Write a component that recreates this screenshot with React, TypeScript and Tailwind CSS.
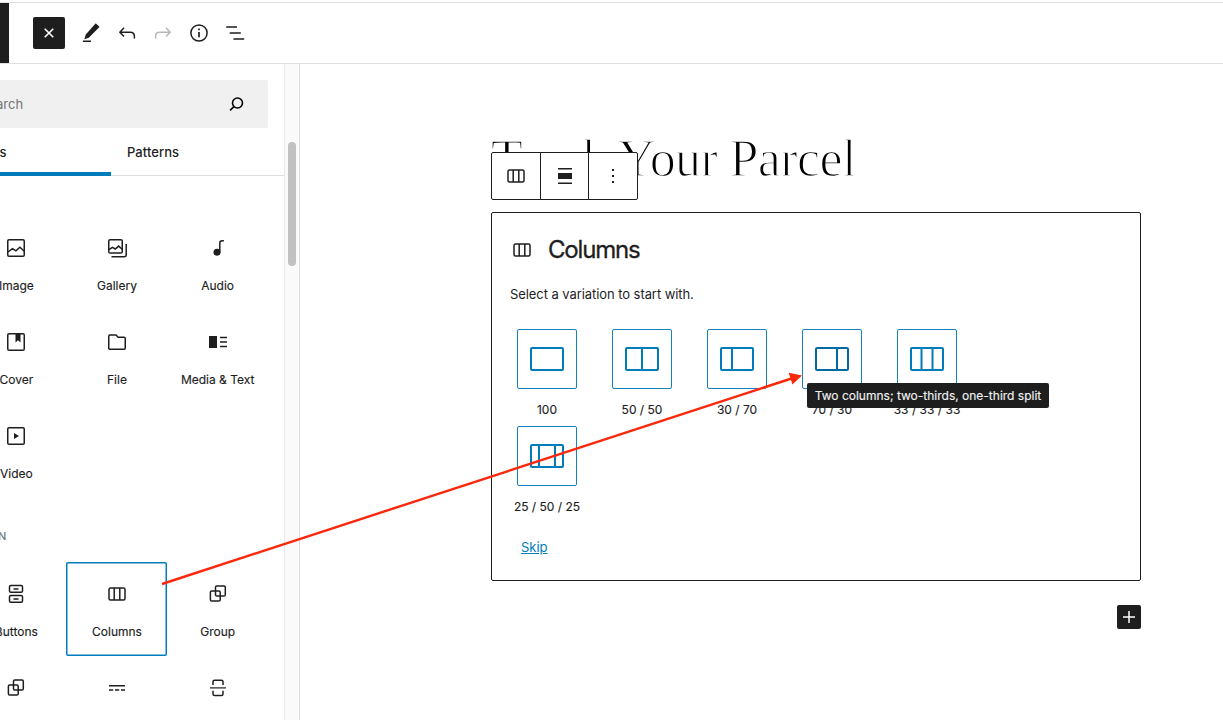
import type { ReactNode } from "react";

function Icon({ children, className = "" }: { children: ReactNode; className?: string }) {
  return (
    <svg
      viewBox="0 0 24 24"
      width="24"
      height="24"
      fill="none"
      stroke="currentColor"
      strokeWidth="1.5"
      className={`block shrink-0 ${className}`}
    >
      {children}
    </svg>
  );
}

const ColumnsIcon = () => (
  <Icon>
    <rect x="4" y="6" width="16" height="12" rx="1.5" />
    <path d="M9.2 6v12M14.8 6v12" />
  </Icon>
);

const GroupIcon = () => (
  <Icon>
    <rect x="9.5" y="4" width="9.8" height="10" rx="1.3" />
    <rect x="4.4" y="9" width="9.8" height="10" rx="1.3" />
  </Icon>
);

const ImageIcon = () => (
  <Icon>
    <rect x="3.75" y="3.75" width="16.5" height="16.5" rx="1.3" />
    <path d="M4 16l4.5-3.3 3.4 2.2 4-3.7 4.3 4.1" />
  </Icon>
);

const GalleryIcon = () => (
  <Icon>
    <rect x="3.75" y="3.75" width="13.5" height="13.3" rx="1.3" />
    <path d="M4 13.6l3.4-2.3 2.9 1.7 3.3-2.9 3.6 3.2" />
    <path d="M21.2 8v10.7c0 1.1-.9 2-2 2H6.5" />
  </Icon>
);

const AudioIcon = () => (
  <Icon>
    <circle cx="11" cy="16.2" r="3.5" fill="currentColor" stroke="none" />
    <path d="M13.8 16.5V7.1c0-1.6.9-2.3 2.4-2.3h1.7" />
  </Icon>
);

const CoverIcon = () => (
  <Icon>
    <rect x="3.75" y="3.75" width="16.5" height="16.5" rx="1.3" />
    <path d="M11.5 4h5v8.4L14 10.3l-2.5 2.1z" fill="currentColor" stroke="none" />
  </Icon>
);

const FileIcon = () => (
  <Icon>
    <path d="M3.75 6.3c0-.7.5-1.2 1.2-1.2h6.1l2 2.2h6c.7 0 1.2.5 1.2 1.2v9.6c0 .7-.5 1.2-1.2 1.2H4.95c-.7 0-1.2-.5-1.2-1.2z" />
  </Icon>
);

const MediaTextIcon = () => (
  <Icon>
    <path d="M3 6h8v12H3z" fill="currentColor" stroke="none" />
    <path d="M14 7.5h7M14 12h7M14 16.5h7" />
  </Icon>
);

const VideoIcon = () => (
  <Icon>
    <rect x="3.75" y="3.75" width="16.5" height="16.5" rx="1.3" />
    <path d="M10 9v6l5-3z" fill="currentColor" stroke="none" />
  </Icon>
);

const ButtonsIcon = () => (
  <Icon>
    <rect x="5.5" y="3.5" width="13" height="6.8" rx="1.3" />
    <rect x="5.5" y="13.5" width="13" height="6.8" rx="1.3" />
    <path d="M9.5 6.9h5M9.5 16.9h5" />
  </Icon>
);

const MoreIcon = () => (
  <Icon>
    <path d="M4 9.7h16M4 14h4.2M10 14h4.2M16 14h4" />
  </Icon>
);

const PageBreakIcon = () => (
  <Icon>
    <path d="M7 9V5.8c0-1 .6-1.6 1.6-1.6h6.8c1 0 1.6.6 1.6 1.6V9" />
    <path d="M7 14.8V18c0 1 .6 1.6 1.6 1.6h6.8c1 0 1.6-.6 1.6-1.6v-3.2" />
    <path d="M4 11.9h16" strokeWidth="1.2" />
  </Icon>
);

function Block({ icon, label, selected }: { icon: ReactNode; label: string; selected?: boolean }) {
  return (
    <div
      className={`flex h-[94px] flex-col items-center rounded-[2px] pt-5 ${
        selected ? "ring-[1.5px] ring-inset ring-[#007cba]" : ""
      }`}
    >
      <div className="pl-px">{icon}</div>
      <span className="mt-[18px] pl-px text-[12px] leading-4 whitespace-nowrap [-webkit-text-stroke:0.15px_#1e1e1e]">
        {label}
      </span>
    </div>
  );
}

function Variation({ label, lines, active }: { label: string; lines: number[]; active?: boolean }) {
  return (
    <div className="flex w-[95px] flex-col items-center">
      <div
        className={`flex h-[60px] w-[60px] items-center justify-center rounded-[2px] border border-[#1682bd] ${
          active ? "text-[#006ba1]" : "text-[#007cba]"
        }`}
      >
        <svg width="36" height="26" viewBox="0 0 36 26" fill="none" stroke="currentColor" strokeWidth="2">
          <rect x="2" y="2" width="32" height="22" rx="1" />
          {lines.map((x) => (
            <path key={x} d={`M${x} 2v22`} />
          ))}
        </svg>
      </div>
      <span className="mt-[13px] h-6 pl-px text-[12px] leading-4 whitespace-nowrap [-webkit-text-stroke:0.15px_#1e1e1e]">
        {label}
      </span>
    </div>
  );
}

function TopBar() {
  return (
    <header className="mt-[2px] flex h-[62px] shrink-0 border-y border-[#e0e0e0]">
      <div className="w-[9px] bg-[#1e1e1e]" />
      <div className="flex items-center pl-6">
        <div className="flex h-8 w-8 items-center justify-center rounded-[2px] bg-[#1e1e1e] text-white">
          <Icon>
            <path d="M7.7 7.7l8.6 8.6M16.3 7.7l-8.6 8.6" strokeWidth="1.6" />
          </Icon>
        </div>
        <div className="ml-[14px] flex gap-3">
          <Icon>
            <path
              d="M17.2 2.7l3 2.7c.3.3.3.6 0 .9L9.8 16.8 5.3 18.3l1.5-4.8L16.3 2.7c.3-.3.6-.3.9 0z"
              fill="currentColor"
              stroke="none"
            />
            <path d="M4 20.25h8" />
          </Icon>
          <Icon>
            <path d="M9 6.8L4.9 11.2 9 15.5M5 11.2h10.2c2.7 0 4.2 1.5 4.2 4.2v2.2" />
          </Icon>
          <Icon className="text-[#b8b8b8]">
            <path d="M15 6.8l4.1 4.4L15 15.5M19 11.2H8.8c-2.7 0-4.2 1.5-4.2 4.2v2.2" />
          </Icon>
          <Icon>
            <circle cx="12" cy="12" r="8.1" />
            <path d="M12 11v5.3M12 7.5v1.7" strokeWidth="1.7" />
          </Icon>
          <Icon>
            <path d="M3.2 5.9h10.8M6.7 12h11.1M10.4 18h10.8" />
          </Icon>
        </div>
      </div>
    </header>
  );
}

function Inserter() {
  return (
    <aside className="flex w-[300px] shrink-0 border-r border-[#dcdcdc]">
      <div className="w-[284px] overflow-hidden">
        <div className="mt-4 flex h-12 w-[268px] items-center justify-between rounded-r-[2px] bg-[#f0f0f0] pr-5">
          <span className="-ml-[20px] pt-[2px] text-[13px] text-[#757575]">Search</span>
          <Icon className="text-black">
            <circle cx="13.5" cy="11" r="5" strokeWidth="1.6" />
            <path d="M9.9 14.6l-3.8 3.8" strokeWidth="1.6" />
          </Icon>
        </div>
        <div className="flex h-12 border-b border-[#ddd] text-[13px] font-medium">
          <div className="-mb-px flex w-[111px] items-center border-b-4 border-[#007cba]">
            <span className="-ml-[35px] pt-[6px]">Blocks</span>
          </div>
          <div className="flex items-center pt-[3px] pl-4 tracking-[0.05px]">Patterns</div>
        </div>
        <div className="-ml-[34.5px] grid w-[302px] grid-cols-3 pt-10">
          <Block icon={<ImageIcon />} label="Image" />
          <Block icon={<GalleryIcon />} label="Gallery" />
          <Block icon={<AudioIcon />} label="Audio" />
          <Block icon={<CoverIcon />} label="Cover" />
          <Block icon={<FileIcon />} label="File" />
          <Block icon={<MediaTextIcon />} label="Media & Text" />
          <Block icon={<VideoIcon />} label="Video" />
        </div>
        <div className="-ml-[35px] mt-[30px] h-[34px] text-[11px] leading-4 font-medium text-[#757575]">DESIGN</div>
        <div className="-ml-[34.5px] grid w-[302px] grid-cols-3">
          <Block icon={<ButtonsIcon />} label="Buttons" />
          <Block icon={<ColumnsIcon />} label="Columns" selected />
          <Block icon={<GroupIcon />} label="Group" />
          <Block icon={<GroupIcon />} label="Row" />
          <Block icon={<MoreIcon />} label="More" />
          <Block icon={<PageBreakIcon />} label="Page Break" />
        </div>
      </div>
      <div className="w-[15px] border-l border-[#e8e8e8] bg-[#fafafa] pt-[78px] pl-[3px]">
        <div className="h-[124px] w-2 rounded-full bg-[#c1c1c1]" />
      </div>
    </aside>
  );
}

function BlockToolbar() {
  return (
    <div className="absolute top-[88px] left-[191px] flex h-12 w-[147px] divide-x divide-[#1e1e1e] rounded-[2px] border border-[#1e1e1e] bg-white">
      <div className="flex flex-1 items-center justify-center">
        <ColumnsIcon />
      </div>
      <div className="flex flex-1 items-center justify-center">
        <Icon>
          <path d="M5 4.7h14M5 19.3h14" />
          <path d="M5 9h14v6H5z" fill="currentColor" stroke="none" />
        </Icon>
      </div>
      <div className="flex flex-1 items-center justify-center">
        <Icon>
          <path d="M11 5h2v2h-2zM11 11h2v2h-2zM11 17h2v2h-2z" fill="currentColor" stroke="none" />
        </Icon>
      </div>
    </div>
  );
}

function Editor() {
  return (
    <main className="relative flex-1 pl-[191px]">
      <h1 className="mt-[65px] h-[60px] text-[52px] leading-[60px] tracking-[-0.6px] whitespace-nowrap text-black [-webkit-text-stroke:1.4px_white] [font-family:'Liberation_Serif',serif]">
        Track Your Parcel
      </h1>
      <section className="mt-[23px] h-[369px] w-[650px] rounded-[2px] border border-[#1e1e1e] pl-[18px]">
        <div className="flex items-center pt-[21px]">
          <ColumnsIcon />
          <h2 className="ml-[14px] text-[24px] leading-8 tracking-[-1.2px] [-webkit-text-stroke:0.3px_#1e1e1e]">
            Columns
          </h2>
        </div>
        <p className="mt-5 text-[13px] leading-4 tracking-[-0.07px]">Select a variation to start with.</p>
        <div className="mt-[27px] -ml-[11px] flex w-[500px] flex-wrap">
          <Variation label="100" lines={[]} />
          <Variation label="50 / 50" lines={[18]} />
          <Variation label="30 / 70" lines={[13]} />
          <Variation label="70 / 30" lines={[23]} active />
          <Variation label="33 / 33 / 33" lines={[12.5, 23.5]} />
          <Variation label="25 / 50 / 25" lines={[10, 26]} />
        </div>
        <a className="mt-4 ml-[11px] block w-fit text-[13px] leading-4 text-[#007cba] underline">Skip</a>
      </section>
      <div className="mt-6 ml-[626px] flex h-6 w-6 items-center justify-center rounded-[2px] bg-[#1e1e1e] text-white">
        <Icon>
          <path d="M12 6v12M6 12h12" />
        </Icon>
      </div>
      <BlockToolbar />
      <div className="absolute top-[319px] left-[507px] flex h-[25px] w-[242px] items-center justify-center rounded-[2px] bg-[#1e1e1e] text-[12px] whitespace-nowrap text-[#f0f0f0] [-webkit-text-stroke:0.15px_#f0f0f0]">
        Two columns; two-thirds, one-third split
      </div>
    </main>
  );
}

export default function App() {
  return (
    <div className="relative flex h-[720px] w-[1223px] flex-col overflow-hidden bg-white text-[#1e1e1e] [font-family:Inter,sans-serif]">
      <TopBar />
      <div className="flex min-h-0 flex-1">
        <Inserter />
        <Editor />
      </div>
      <svg className="pointer-events-none absolute inset-0" width="1223" height="720" viewBox="0 0 1223 720">
        <path d="M162 584L793 378" stroke="#fb280b" strokeWidth="2.4" fill="none" />
        <path d="M802 375.5l-13.3-2.7 3.7 11.6z" fill="#fb280b" />
      </svg>
    </div>
  );
}
